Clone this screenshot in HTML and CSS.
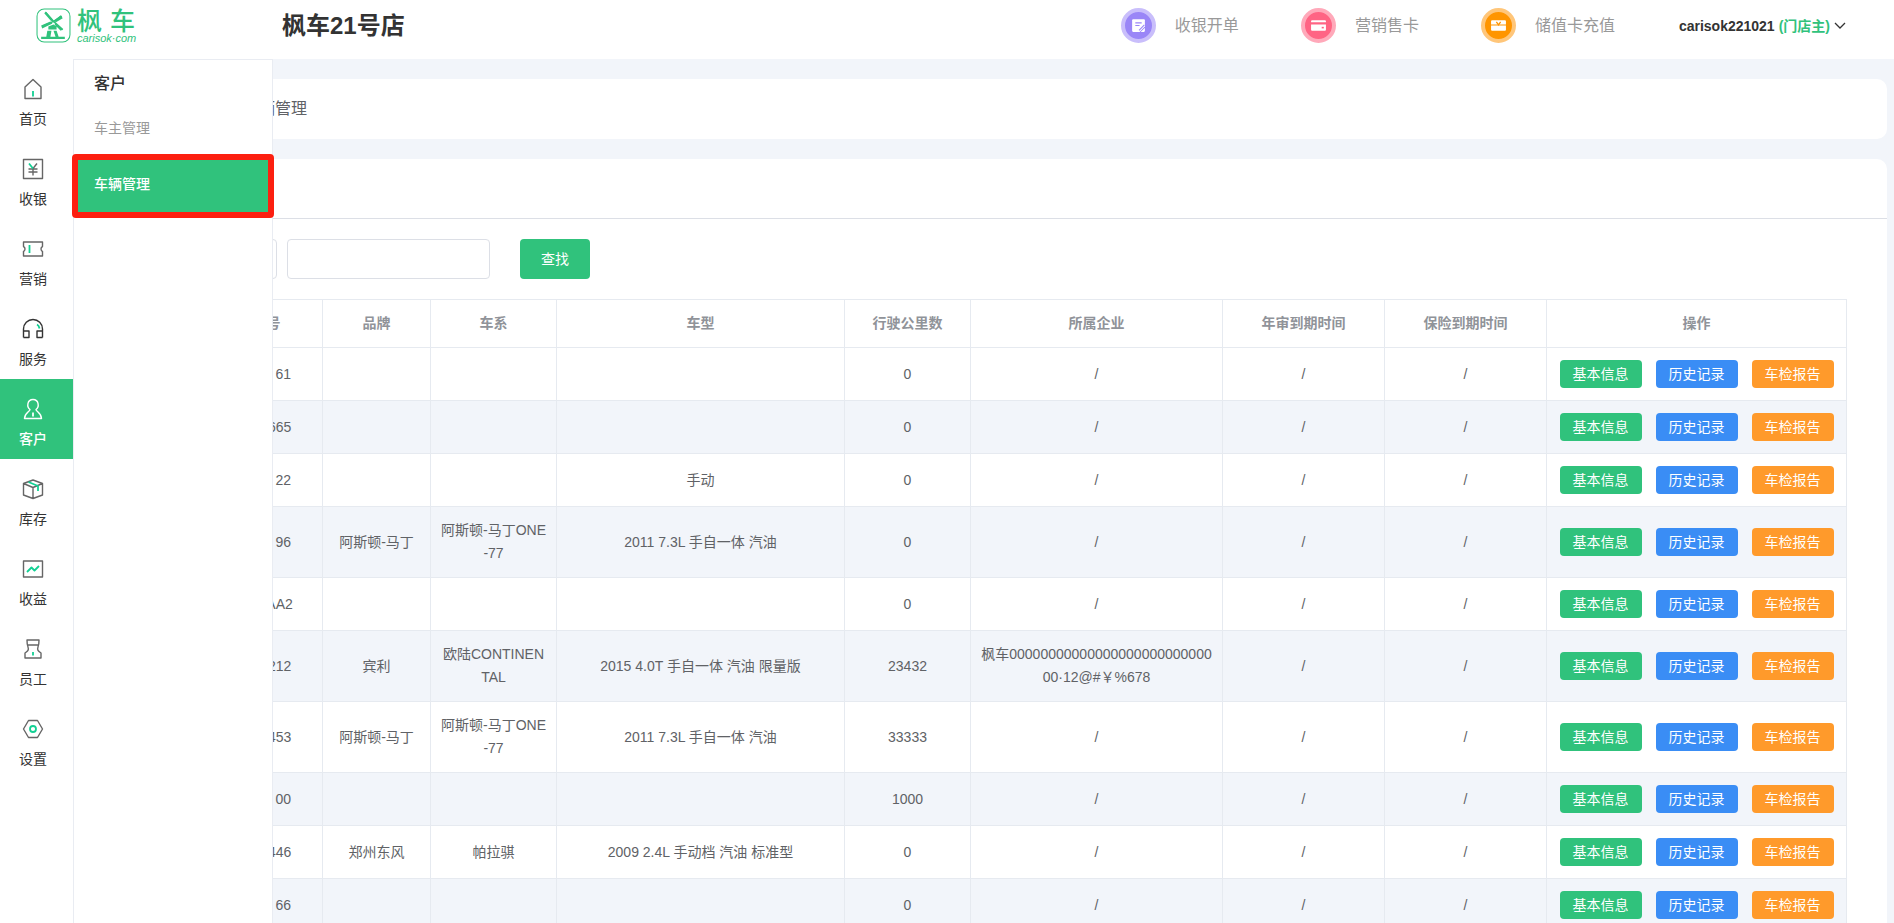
FILE: index.html
```html
<!DOCTYPE html>
<html lang="zh-CN">
<head>
<meta charset="utf-8">
<title>车辆管理 - 枫车21号店</title>
<link rel="stylesheet" href="styles.css">
</head>
<body>
<div class="app">
  <header class="header">
    <a class="logo" href="#" aria-label="枫车">
      <svg class="logo-mark" viewBox="0 0 34 34" fill="none" stroke="currentColor">
        <rect x="1" y="1" width="32" height="32" rx="7"/>
        <path d="M9 4l8 9 8-5M17 13l-11 5M17 13l9 8" stroke-width="1.5"/>
        <path fill="currentColor" stroke="none" d="M8 5l2-1 6 7-1 2zM18 12l6-5 2 3-7 4zM5 17l9-4 2 2-10 5zM19 15l7 6-2 1-6-6zM12 18l5-2 3 2v3h-8zM11 22h4l-1 6h-4zM17 22h3l2 6h-3zM5 28h23v2H5z"/>
      </svg>
      <span class="logo-text">
        <span class="logo-name"><span>枫</span><span>车</span></span>
        <span class="logo-site">carisok·com</span>
      </span>
    </a>
    <h1 class="store">枫车21号店</h1>
    <nav class="quick">
      <a class="quick-link" href="#"><span class="disc disc-purple"><svg viewBox="0 0 16 16"><path fill="#fff" d="M3 2h10a1 1 0 0 1 1 1v6l-5 5H3a1 1 0 0 1-1-1V3a1 1 0 0 1 1-1z"/><path d="M5 5.500h6M5 8h4M8.500 12.500l5-5" stroke="#9a86f7" fill="none"/><path d="M10 14l4-4v3a1 1 0 0 1-1 1z" fill="#fff"/></svg></span>收银开单</a>
      <a class="quick-link" href="#"><span class="disc disc-pink"><svg viewBox="0 0 16 16"><path fill="#fff" d="M2 3h12a1 1 0 0 1 1 1v1H1V4a1 1 0 0 1 1-1zM1 7h14v5a1 1 0 0 1-1 1H2a1 1 0 0 1-1-1z"/><path d="M11 10h2" stroke="#ff6484" stroke-width="1.500"/></svg></span>营销售卡</a>
      <a class="quick-link" href="#"><span class="disc disc-orange"><svg viewBox="0 0 16 16"><path fill="#fff" d="M2 3h12a1 1 0 0 1 1 1v3H1V4a1 1 0 0 1 1-1zM1 8h14v4a1 1 0 0 1-1 1H2a1 1 0 0 1-1-1z"/><path d="M6 4.500l2 3 2-3" stroke="#ff9500" fill="none" stroke-width="1.200"/></svg></span>储值卡充值</a>
    </nav>
    <button class="user" type="button">carisok221021 <span class="role">(门店主)</span>
      <svg class="chevron" viewBox="0 0 12 12" fill="none" stroke="currentColor" stroke-width="1.300"><path d="M1 3l5 5 5-5"/></svg>
    </button>
  </header>
  <div class="body">
    <nav class="sidebar">
      <a class="side-item" href="#"><svg viewBox="0 0 22 22"><path d="M3 9L11 1.500 19 9v11.500H3z"/><path class="accent" d="M11 13v5.500"/></svg>首页</a>
      <a class="side-item" href="#"><svg viewBox="0 0 22 22"><path d="M1.500 1.500h19v19h-19zM15 5.500l-4 5v7M6.500 11h9M6.500 14h9"/><path class="accent" d="M7 5.500l4 5"/></svg>收银</a>
      <a class="side-item" href="#"><svg viewBox="0 0 22 22"><path d="M1.500 4h19v4.500c-2 1-2 4 0 5V18h-19v-4.500c2-1 2-4 0-5z"/><path class="accent" d="M7.500 7v8"/></svg>营销</a>
      <a class="side-item dark" href="#"><svg viewBox="0 0 22 22"><path d="M1.500 19.500V11a9.500 9.500 0 0 1 19 0v8.500M1.500 13h5.500v6.500H1.500M20.500 13H15v6.500h5.500"/><path class="accent" d="M15 6.500q2 1 2.500 4"/></svg>服务</a>
      <a class="side-item active" href="#"><svg viewBox="0 0 22 22"><path d="M8 11.500C4.500 9 5 1.500 11 1.500s6.500 7.500 3 10c0 2 5.500 3.500 5.500 9h-17c0-5.500 5.500-7 5.500-9z"/><path class="accent" d="M11 14.500v4"/></svg>客户</a>
      <a class="side-item" href="#"><svg viewBox="0 0 22 22"><path d="M11 2l9.500 3.500V17L11 20.500 1.500 17V5.500zM1.500 5.500L11 9.500l9.500-4M11 9.500v11"/><path class="accent" d="M6.500 4l9.500 4v5"/></svg>库存</a>
      <a class="side-item" href="#"><svg viewBox="0 0 22 22"><path d="M1.500 3h19v16h-19z"/><path class="accent" d="M5 14l4.500-4.500 3 3L17 8"/></svg>收益</a>
      <a class="side-item" href="#"><svg viewBox="0 0 22 22"><path d="M5 2h12c0 5 0 5-1 7-1 3 0 4 3 6v5H3v-5c3-2 4-3 3-6-1-2-1-2-1-7zM5 7h12"/><path class="accent" d="M11 14v3.500"/></svg>员工</a>
      <a class="side-item" href="#"><svg viewBox="0 0 22 22"><path d="M6.500 2.500h9l5 8.500-5 8.500h-9L1.500 11z"/><circle class="accent" cx="11" cy="11" r="3"/></svg>设置</a>
    </nav>
    <main class="main">
      <div class="card crumbs"><span>首页</span><span class="sep">&gt;</span><span>客户</span><span class="sep">&gt;</span><span>车辆管理</span></div>
      <section class="card" aria-label="车辆管理">
        <div class="card-head"></div>
        <div class="card-body">
          <form class="search">
            <input class="field field-type" type="text" aria-label="查询类型">
            <input class="field field-word" type="text" aria-label="关键字">
            <button class="search-btn" type="button">查找</button>
          </form>
          <table class="table">
            <colgroup><col class="w63"><col class="w126"><col class="w108"><col class="w126"><col class="w288"><col class="w126"><col class="w252"><col class="w162"><col class="w162"><col class="w300"></colgroup>
            <thead><tr><th>序号</th><th>车牌号</th><th>品牌</th><th>车系</th><th>车型</th><th>行驶公里数</th><th>所属企业</th><th>年审到期时间</th><th>保险到期时间</th><th>操作</th></tr></thead>
            <tbody>
              <tr><td>1</td><td>粤WA2 61</td><td></td><td></td><td></td><td>0</td><td>/</td><td>/</td><td>/</td><td><div class="ops"><button class="btn green">基本信息</button><button class="btn blue">历史记录</button><button class="btn orange">车检报告</button></div></td></tr>
              <tr><td>2</td><td>粤G12665</td><td></td><td></td><td></td><td>0</td><td>/</td><td>/</td><td>/</td><td><div class="ops"><button class="btn green">基本信息</button><button class="btn blue">历史记录</button><button class="btn orange">车检报告</button></div></td></tr>
              <tr><td>3</td><td>粤WA2 22</td><td></td><td></td><td>手动</td><td>0</td><td>/</td><td>/</td><td>/</td><td><div class="ops"><button class="btn green">基本信息</button><button class="btn blue">历史记录</button><button class="btn orange">车检报告</button></div></td></tr>
              <tr><td>4</td><td>粤WA2 96</td><td>阿斯顿-马丁</td><td>阿斯顿-马丁ONE-77</td><td>2011 7.3L 手自一体 汽油</td><td>0</td><td>/</td><td>/</td><td>/</td><td><div class="ops"><button class="btn green">基本信息</button><button class="btn blue">历史记录</button><button class="btn orange">车检报告</button></div></td></tr>
              <tr><td>5</td><td>粤M11AA2</td><td></td><td></td><td></td><td>0</td><td>/</td><td>/</td><td>/</td><td><div class="ops"><button class="btn green">基本信息</button><button class="btn blue">历史记录</button><button class="btn orange">车检报告</button></div></td></tr>
              <tr><td>6</td><td>粤G12212</td><td>宾利</td><td>欧陆CONTINENTAL</td><td>2015 4.0T 手自一体 汽油 限量版</td><td>23432</td><td>枫车0000000000000000000000000000·12@#￥%678</td><td>/</td><td>/</td><td><div class="ops"><button class="btn green">基本信息</button><button class="btn blue">历史记录</button><button class="btn orange">车检报告</button></div></td></tr>
              <tr><td>7</td><td>粤G12453</td><td>阿斯顿-马丁</td><td>阿斯顿-马丁ONE-77</td><td>2011 7.3L 手自一体 汽油</td><td>33333</td><td>/</td><td>/</td><td>/</td><td><div class="ops"><button class="btn green">基本信息</button><button class="btn blue">历史记录</button><button class="btn orange">车检报告</button></div></td></tr>
              <tr><td>8</td><td>粤WA2 00</td><td></td><td></td><td></td><td>1000</td><td>/</td><td>/</td><td>/</td><td><div class="ops"><button class="btn green">基本信息</button><button class="btn blue">历史记录</button><button class="btn orange">车检报告</button></div></td></tr>
              <tr><td>9</td><td>粤G12446</td><td>郑州东风</td><td>帕拉骐</td><td>2009 2.4L 手动档 汽油 标准型</td><td>0</td><td>/</td><td>/</td><td>/</td><td><div class="ops"><button class="btn green">基本信息</button><button class="btn blue">历史记录</button><button class="btn orange">车检报告</button></div></td></tr>
              <tr><td>10</td><td>粤WA2 66</td><td></td><td></td><td></td><td>0</td><td>/</td><td>/</td><td>/</td><td><div class="ops"><button class="btn green">基本信息</button><button class="btn blue">历史记录</button><button class="btn orange">车检报告</button></div></td></tr>
            </tbody>
          </table>
        </div>
      </section>
    </main>
    <nav class="submenu">
      <h2 class="submenu-title">客户</h2>
      <a class="submenu-item" href="#">车主管理</a>
      <a class="submenu-item current" href="#">车辆管理</a>
    </nav>
  </div>
</div>
</body>
</html>
```
FILE: styles.css
```css
* { box-sizing: border-box; }

body {
  margin: 0;
  font: 14px/20px "Liberation Sans", "Noto Sans CJK SC", sans-serif;
  color: #333;
}

a { color: inherit; text-decoration: none; }
button, input { font: inherit; }
button { border: 0; cursor: pointer; }

.app { display: flex; flex-direction: column; height: 100vh; overflow: hidden; }

/* Header */
.header {
  display: flex;
  align-items: center;
  flex: none;
  height: 59px;
  padding: 0 48px 8px 36px;
  background: #fff;
}
.logo { display: flex; align-items: center; gap: 6px; width: 246px; color: #30c27c; }
.logo-mark { width: 35px; height: 35px; }
.logo-text { display: flex; flex-direction: column; }
.logo-name { display: flex; gap: 8px; font-size: 25px; line-height: 24px; font-weight: 500; }
.logo-site { font-size: 11px; line-height: 10px; font-style: italic; }
.store { margin: 0; font-size: 24px; line-height: 32px; font-weight: bold; }
.quick { display: flex; gap: 62px; margin-left: auto; color: #999; font-size: 16px; }
.quick-link { display: flex; align-items: center; gap: 19px; }
.disc {
  display: flex;
  align-items: center;
  justify-content: center;
  width: 35px;
  height: 35px;
  border: 4px solid;
  border-radius: 50%;
}
.disc svg { width: 17px; height: 17px; }
.disc-purple { background: #9a86f7; border-color: #c9befb; }
.disc-pink { background: #ff6484; border-color: #ffa9ba; }
.disc-orange { background: #ff9500; border-color: #ffc67a; }
.user {
  display: flex;
  align-items: center;
  gap: 4px;
  margin-left: 64px;
  padding: 0;
  background: none;
  color: #333;
  font-weight: bold;
}
.role { color: #30c27c; }
.chevron { width: 12px; height: 12px; }

/* Left rail */
.body { position: relative; display: flex; flex: 1; min-height: 0; background: #f2f5fa; }
.sidebar { flex: none; width: 73px; background: #fff; }
.side-item {
  display: flex;
  flex-direction: column;
  align-items: center;
  gap: 9px;
  height: 80px;
  padding: 19px 7px 0 0;
}
.side-item svg {
  width: 22px;
  height: 22px;
  fill: none;
  stroke: #666;
  stroke-width: 1.4;
  stroke-linejoin: round;
}
.side-item.dark svg { stroke: #333; }
.side-item .accent { stroke: #12d093; stroke-width: 1.8; }
.side-item.active { background: #30c27c; color: #fff; font-weight: 500; }
.side-item.active svg, .side-item.active .accent { stroke: #fff; }

/* Flyout menu over the page */
.submenu {
  position: absolute;
  top: 0;
  bottom: 0;
  left: 73px;
  width: 200px;
  background: #fff;
  border: 1px solid #e9ecf2;
  border-bottom: 0;
}
.submenu-title { margin: 0; padding: 12px 20px 4px; font-size: 16px; line-height: 24px; font-weight: 500; }
.submenu-item { display: block; padding: 0 20px; line-height: 56px; color: #999; }
.submenu-item.current {
  padding-bottom: 4px;
  background: #30c27c;
  color: #fff;
  font-weight: 500;
  border-radius: 2px;
  outline: 6px solid #fc1f10;
  outline-offset: -4px;
}

/* Content */
.main { flex: 1; min-width: 0; padding: 20px 7px 0 20px; overflow: hidden; }
.card { margin-bottom: 20px; background: #fff; border-radius: 10px; }
.crumbs { display: flex; gap: 8px; padding: 18px 40px; font-size: 16px; line-height: 24px; color: #606266; }
.sep { width: 7px; }
.card-head { height: 60px; border-bottom: 1px solid #dcdfe6; }
.card-body { padding: 20px 40px; }
.search { display: flex; margin-bottom: 20px; }
.field { height: 40px; padding: 0 15px; border: 1px solid #dcdfe6; border-radius: 4px; }
.field-type { width: 144px; margin-right: 10px; }
.field-word { width: 203px; margin-right: 30px; }
.search-btn { width: 70px; height: 40px; border-radius: 4px; background: #30c27c; color: #fff; }

.table {
  width: 100%;
  table-layout: fixed;
  border-collapse: separate;
  border-spacing: 0;
  border-top: 1px solid #e6eaf0;
  border-left: 1px solid #e6eaf0;
  line-height: 23px;
  color: #606266;
  text-align: center;
  word-break: break-all;
}
.table th, .table td {
  padding: 12px 10px;
  border-right: 1px solid #e6eaf0;
  border-bottom: 1px solid #e6eaf0;
}
.table th { color: #909399; font-weight: bold; }
.table tbody tr:nth-child(even) { background: #f2f5fa; }
.w63 { width: 63px; }
.w108 { width: 108px; }
.w126 { width: 126px; }
.w162 { width: 162px; }
.w252 { width: 252px; }
.w288 { width: 288px; }
.w300 { width: 300px; }

.ops { display: flex; justify-content: center; gap: 14px; }
.btn { height: 28px; padding: 0 13px; border-radius: 4px; color: #fff; white-space: nowrap; }
.green { background: #30c27c; }
.blue { background: #3a8df5; }
.orange { background: #ff9a2b; }
```
